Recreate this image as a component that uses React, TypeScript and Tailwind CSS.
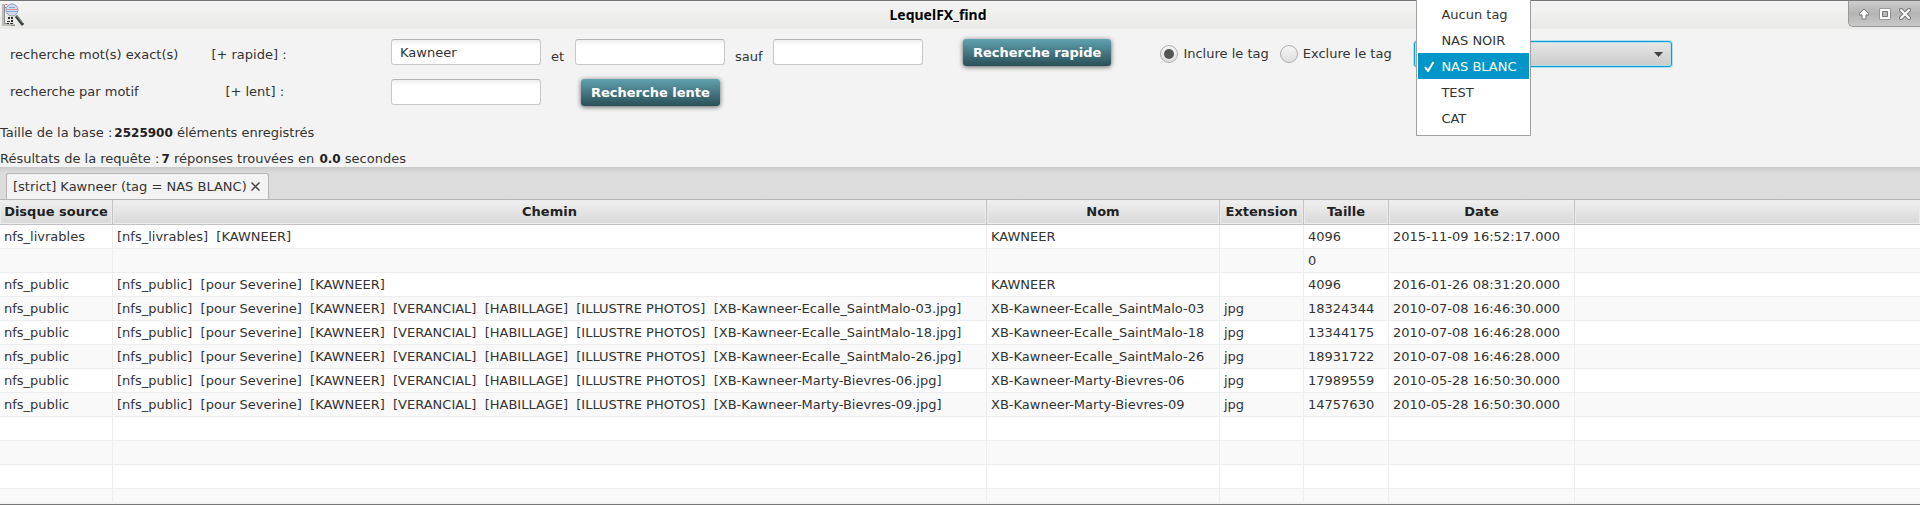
import { useState } from "react";

const TAGS = ["Aucun tag", "NAS NOIR", "NAS BLANC", "TEST", "CAT"];

const COLUMNS = [
  { name: "Disque source", width: "w-[113px]" },
  { name: "Chemin", width: "w-[874px]" },
  { name: "Nom", width: "w-[233px]" },
  { name: "Extension", width: "w-[84px]" },
  { name: "Taille", width: "w-[85px]" },
  { name: "Date", width: "w-[186px]" },
];

const PHOTOS = "[nfs_public]  [pour Severine]  [KAWNEER]  [VERANCIAL]  [HABILLAGE]  [ILLUSTRE PHOTOS]  ";

const ROWS: string[][] = [
  ["nfs_livrables", "[nfs_livrables]  [KAWNEER]", "KAWNEER", "", "4096", "2015-11-09 16:52:17.000"],
  ["", "", "", "", "0", ""],
  ["nfs_public", "[nfs_public]  [pour Severine]  [KAWNEER]", "KAWNEER", "", "4096", "2016-01-26 08:31:20.000"],
  ["nfs_public", PHOTOS + "[XB-Kawneer-Ecalle_SaintMalo-03.jpg]", "XB-Kawneer-Ecalle_SaintMalo-03", "jpg", "18324344", "2010-07-08 16:46:30.000"],
  ["nfs_public", PHOTOS + "[XB-Kawneer-Ecalle_SaintMalo-18.jpg]", "XB-Kawneer-Ecalle_SaintMalo-18", "jpg", "13344175", "2010-07-08 16:46:28.000"],
  ["nfs_public", PHOTOS + "[XB-Kawneer-Ecalle_SaintMalo-26.jpg]", "XB-Kawneer-Ecalle_SaintMalo-26", "jpg", "18931722", "2010-07-08 16:46:28.000"],
  ["nfs_public", PHOTOS + "[XB-Kawneer-Marty-Bievres-06.jpg]", "XB-Kawneer-Marty-Bievres-06", "jpg", "17989559", "2010-05-28 16:50:30.000"],
  ["nfs_public", PHOTOS + "[XB-Kawneer-Marty-Bievres-09.jpg]", "XB-Kawneer-Marty-Bievres-09", "jpg", "14757630", "2010-05-28 16:50:30.000"],
  ["", "", "", "", "", ""],
  ["", "", "", "", "", ""],
  ["", "", "", "", "", ""],
  ["", "", "", "", "", ""],
];

function AppIcon() {
  return (
    <svg width="24" height="24" viewBox="0 0 24 24" aria-hidden="true">
      <path d="M1 1h3v20h10v2H1z" fill="#bdbdba" />
      <path d="M3.500 2v18.500h3M10 22.500h4" fill="none" stroke="#8c8c8a" />
      <path d="M6 13h7v8H6z" fill="#e4e4e2" />
      <path d="M7 14h2v2H7zM10 14h2v2h-2zM6 18h3v1H6zM10 17h2v2h-2zM6 20h2v1H6zM9 20h3v1H9z" fill="#333" />
      <path d="M4.500 1.500h2M4 4.500h1" stroke="#d66" />
      <path d="M15 13l7 9" stroke="#3d4540" strokeWidth="3" />
      <path d="M15 12l7 8" stroke="#9aa09b" strokeWidth="1" />
      <circle cx="11" cy="7" r="6" fill="#cfdcf0" stroke="#8d9cb8" />
      <path d="M6 6.500h10" stroke="#e08f97" />
      <path d="M6 8.500h10M8 4.500h6" stroke="#8fa5d4" />
    </svg>
  );
}

function TextBox({ id, label, value }: { id: string; label: string; value?: string }) {
  return (
    <input
      id={id}
      type="text"
      aria-label={label}
      defaultValue={value}
      className="h-[26px] w-[150px] rounded-[3px] border border-[#c8c8c8] border-t-[#b5b5b5] bg-white bg-linear-to-b from-[#ededed] to-white to-[5px] px-2 outline-none"
    />
  );
}

function ActionButton({ children }: { children: string }) {
  return (
    <button
      type="button"
      className="h-[27px] rounded-[3px] bg-linear-to-b from-[#61a2b1] to-[#2a5058] px-[10px] font-bold text-white shadow-[0_1px_5px_rgba(0,0,0,0.6)]"
    >
      {children}
    </button>
  );
}

function Radio({ label, checked, onChange }: { label: string; checked: boolean; onChange: () => void }) {
  return (
    <label className="flex items-center gap-[5px]">
      <input
        type="radio"
        name="mode"
        checked={checked}
        onChange={onChange}
        className="flex size-[18px] appearance-none items-center justify-center rounded-full border border-[#adadad] bg-linear-to-b from-[#f6f6f6] to-[#dedede] before:size-[10px] before:rounded-full checked:before:bg-[#555]"
      />
      {label}
    </label>
  );
}

export default function App() {
  const [include, setInclude] = useState(true);
  const [tag, setTag] = useState("NAS BLANC");

  return (
    <div className="flex h-screen flex-col overflow-hidden border-b border-[#777] bg-[#f3f3f3] font-['DejaVu_Sans',sans-serif] text-[13px] leading-4 text-[#333]">
      <header className="flex h-[29px] shrink-0 items-center border-t border-[#777] bg-linear-to-b from-[#f4f4f4] to-[#e9e9e7]">
        <div className="w-7 pl-px">
          <AppIcon />
        </div>
        <h1 className="flex-1 text-center font-['Noto_Sans',sans-serif] text-sm font-bold text-black [text-shadow:1px_1px_0_#fff]">
          LequelFX_find
        </h1>
        <div className="flex h-[26px] w-[72px] items-center justify-evenly self-start rounded-bl-[5px] border-b border-l border-[#999] bg-linear-to-b from-[#cecece] via-[#b4b4b4] to-[#c9c9c9]">
          <button type="button" aria-label="Réduire">
            <svg width="12" height="12" viewBox="0 0 12 12">
              <path d="M6 1l4.500 4.500v1.500H8V11H4V7H1.500V5.500z" fill="#fff" stroke="#777" />
            </svg>
          </button>
          <button type="button" aria-label="Agrandir">
            <svg width="12" height="12" viewBox="0 0 12 12">
              <path d="M1.500 1.500h9v9h-9z" fill="none" stroke="#777" strokeWidth="2" />
              <path d="M2 2h8v8H2z" fill="#b8b8b8" stroke="#fff" strokeWidth="2" />
              <path d="M3.500 3.500h5v5h-5z" fill="none" stroke="#777" />
            </svg>
          </button>
          <button type="button" aria-label="Fermer">
            <svg width="12" height="12" viewBox="0 0 12 12">
              <path d="M2 2l8 8M10 2l-8 8" stroke="#777" strokeWidth="4" strokeLinecap="round" />
              <path d="M2 2l8 8M10 2l-8 8" stroke="#fff" strokeWidth="2" strokeLinecap="round" />
            </svg>
          </button>
        </div>
      </header>

      <form className="flex shrink-0 flex-col gap-[10px] pt-[10px] pl-[10px]">
        <div className="flex h-[30px] items-center">
          <label htmlFor="exact" className="w-[381px] pt-px whitespace-pre">
            {"recherche mot(s) exact(s)" + " ".repeat(8) + "[+ rapide] :"}
          </label>
          <div className="flex items-end gap-[10px] self-start">
            <TextBox id="exact" label="recherche mot(s) exact(s)" value="Kawneer" />
            <label htmlFor="and" className="w-[14px]">et</label>
            <TextBox id="and" label="et" />
            <label htmlFor="except" className="w-7">sauf</label>
            <TextBox id="except" label="sauf" />
          </div>
          <div className="ml-10 self-start">
            <ActionButton>Recherche rapide</ActionButton>
          </div>
          <div className="ml-[49px] flex w-[254px] gap-[11px]">
            <Radio label="Inclure le tag" checked={include} onChange={() => setInclude(true)} />
            <Radio label="Exclure le tag" checked={!include} onChange={() => setInclude(false)} />
          </div>
          <div className="relative flex items-center">
            <select
              aria-label="Tag"
              value={tag}
              onChange={(e) => setTag(e.target.value)}
              className="h-[26px] w-[258px] appearance-none rounded-[3px] border border-[#039ed3] bg-linear-to-b from-[#e6e6e6] to-[#cbcbcb] px-2 shadow-[0_0_0_1px_#b5dfee,inset_0_0_0_1px_#b5dfee] outline-none"
            >
              {TAGS.map((t) => (
                <option key={t}>{t}</option>
              ))}
            </select>
            <svg className="pointer-events-none absolute right-[9px]" width="9" height="5" viewBox="0 0 9 5">
              <path d="M0 0h9L4.500 5z" fill="#444" />
            </svg>
            <ul className="absolute top-[-41px] left-[2px] z-10 w-[115px] border border-t-0 border-[#a0a0a0] bg-white px-px pt-px pb-1">
              {TAGS.map((t) => (
                <li key={t}>
                  <button
                    type="button"
                    onClick={() => setTag(t)}
                    className={
                      t === tag
                        ? "flex h-[26px] w-full items-center bg-[#0096c9] pt-px text-white"
                        : "flex h-[26px] w-full items-center pt-px"
                    }
                  >
                    <span className="flex w-[23px] justify-center">
                      {t === tag && (
                        <svg width="11" height="11" viewBox="0 0 11 11">
                          <path d="M1 6l3 4L9.500 1" fill="none" stroke="#fff" strokeWidth="2" />
                        </svg>
                      )}
                    </span>
                    {t}
                  </button>
                </li>
              ))}
            </ul>
          </div>
        </div>
        <div className="flex h-[26px] items-center">
          <label htmlFor="pattern" className="w-[381px] whitespace-pre">
            {"recherche par motif" + " ".repeat(21) + "[+ lent] :"}
          </label>
          <TextBox id="pattern" label="recherche par motif" />
          <div className="ml-10 self-start">
            <ActionButton>Recherche lente</ActionButton>
          </div>
        </div>
      </form>

      <div className="flex shrink-0 flex-col gap-[10px] pt-5">
        <p>
          Taille de la base :<b className="ml-[2px] text-[12px] text-[#222]">2525900</b> éléments enregistrés
        </p>
        <p>
          Résultats de la requête :<b className="ml-[2px] text-[12px] text-[#222]">7</b> réponses trouvées en{" "}
          <b className="ml-px text-[12px] text-[#222]">0.0</b> secondes
        </p>
      </div>

      <div className="flex h-[33px] shrink-0 items-end border-b border-[#b5b5b5] bg-linear-to-b from-[#cacaca] to-[#dcdcdc] to-[6px] pl-[6px]">
        <div className="flex h-[26px] items-center gap-1 rounded-t-[3px] border border-b-0 border-[#b5b5b5] bg-[#f3f3f3] px-[6px]">
          <span>[strict] Kawneer (tag = NAS BLANC)</span>
          <button type="button" aria-label="Fermer l'onglet" className="pr-[2px]">
            <svg width="9" height="9" viewBox="0 0 9 9">
              <path d="M.5.5l8 8M8.500.5l-8 8" stroke="#444" strokeWidth="1.500" />
            </svg>
          </button>
        </div>
      </div>

      <div className="mb-[2px] min-h-0 flex-1 overflow-hidden bg-white">
        <table className="w-full table-fixed border-separate border-spacing-0">
          <colgroup>
            {COLUMNS.map((c) => (
              <col key={c.name} className={c.width} />
            ))}
            <col />
          </colgroup>
          <thead>
            <tr className="h-[25px]">
              {COLUMNS.map((c) => (
                <th
                  key={c.name}
                  className="border-r border-b border-[#c2c2c2] bg-linear-to-b from-[#f0f0f0] to-[#d8d8d8] p-0 text-center font-bold whitespace-nowrap text-[#222] shadow-[inset_0_0_0_1px_#ececec]"
                >
                  {c.name}
                </th>
              ))}
              <th className="border-b border-[#c2c2c2] bg-linear-to-b from-[#f0f0f0] to-[#d8d8d8] p-0 shadow-[inset_0_0_0_1px_#ececec]" />
            </tr>
          </thead>
          <tbody>
            {ROWS.map((row, r) => (
              <tr key={r} className="h-6 odd:bg-white even:bg-[#f9f9f9]">
                {row.map((cell, c) => (
                  <td key={c} className="border-r border-b border-[#ededed] px-1 py-0 whitespace-pre">
                    {cell}
                  </td>
                ))}
                <td className="border-b border-[#ededed] p-0" />
              </tr>
            ))}
          </tbody>
        </table>
      </div>
    </div>
  );
}
